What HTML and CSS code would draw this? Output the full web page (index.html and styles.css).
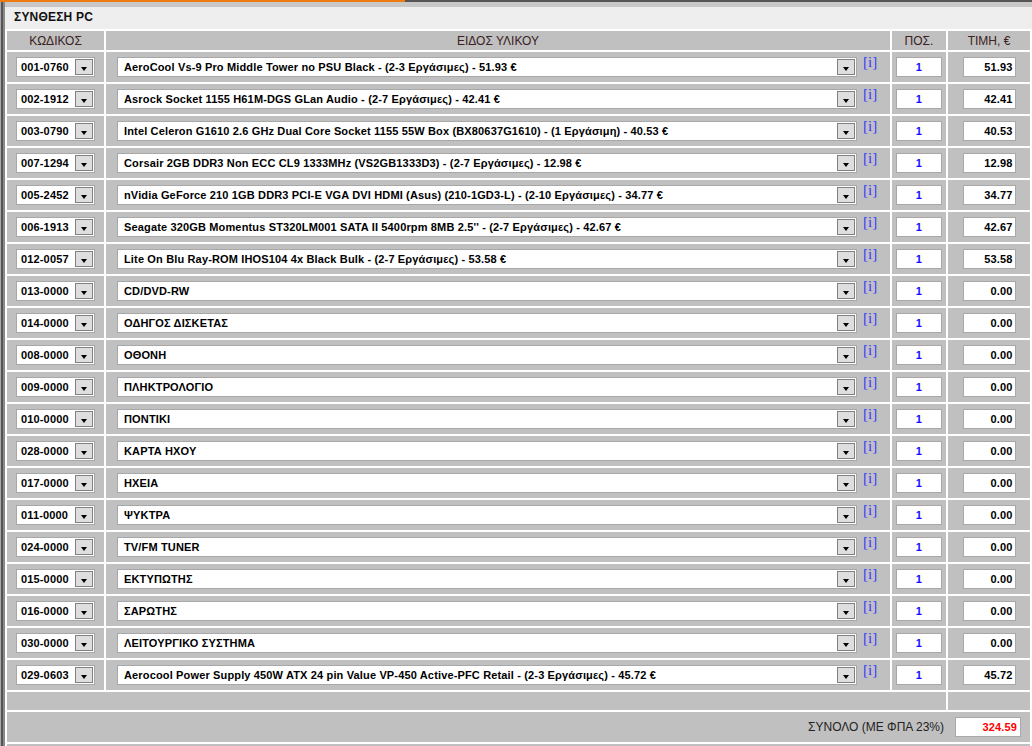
FILE: index.html
```html
<!DOCTYPE html>
<html lang="el">

<head>
    <meta charset="UTF-8">
    <title>Σύνθεση PC</title>
    <link rel="stylesheet" href="styles.css">
</head>

<body>
    <div class="topbar"><span class="accent"></span></div>
    <div class="panel">
        <div class="strip"></div>
        <div class="title">ΣΥΝΘΕΣΗ PC</div>

        <table class="builder">
            <colgroup>
                <col class="c-code">
                <col class="c-item">
                <col class="c-qty">
                <col class="c-price">
            </colgroup>
            <thead>
                <tr>
                    <th>ΚΩΔΙΚΟΣ</th>
                    <th>ΕΙΔΟΣ ΥΛΙΚΟΥ</th>
                    <th>ΠΟΣ.</th>
                    <th>ΤΙΜΗ, €</th>
                </tr>
            </thead>
            <tbody>
                <tr>
                    <td class="code"><div class="combo small"><span class="val">001-0760</span><span class="btn"></span></div></td>
                    <td class="item"><div class="combo wide"><span class="val">AeroCool Vs-9 Pro Middle Tower no PSU Black - (2-3 Εργάσιμες) - 51.93 €</span><span class="btn"></span></div><a class="info" href="#">[i]</a></td>
                    <td class="qty"><div class="box">1</div></td>
                    <td class="price"><div class="box">51.93</div></td>
                </tr>
                <tr>
                    <td class="code"><div class="combo small"><span class="val">002-1912</span><span class="btn"></span></div></td>
                    <td class="item"><div class="combo wide"><span class="val">Asrock Socket 1155 H61M-DGS GLan Audio - (2-7 Εργάσιμες) - 42.41 €</span><span class="btn"></span></div><a class="info" href="#">[i]</a></td>
                    <td class="qty"><div class="box">1</div></td>
                    <td class="price"><div class="box">42.41</div></td>
                </tr>
                <tr>
                    <td class="code"><div class="combo small"><span class="val">003-0790</span><span class="btn"></span></div></td>
                    <td class="item"><div class="combo wide"><span class="val">Intel Celeron G1610 2.6 GHz Dual Core Socket 1155 55W Box (BX80637G1610) - (1 Εργάσιμη) - 40.53 €</span><span class="btn"></span></div><a class="info" href="#">[i]</a></td>
                    <td class="qty"><div class="box">1</div></td>
                    <td class="price"><div class="box">40.53</div></td>
                </tr>
                <tr>
                    <td class="code"><div class="combo small"><span class="val">007-1294</span><span class="btn"></span></div></td>
                    <td class="item"><div class="combo wide"><span class="val">Corsair 2GB DDR3 Non ECC CL9 1333MHz (VS2GB1333D3) - (2-7 Εργάσιμες) - 12.98 €</span><span class="btn"></span></div><a class="info" href="#">[i]</a></td>
                    <td class="qty"><div class="box">1</div></td>
                    <td class="price"><div class="box">12.98</div></td>
                </tr>
                <tr>
                    <td class="code"><div class="combo small"><span class="val">005-2452</span><span class="btn"></span></div></td>
                    <td class="item"><div class="combo wide"><span class="val">nVidia GeForce 210 1GB DDR3 PCI-E VGA DVI HDMI (Asus) (210-1GD3-L) - (2-10 Εργάσιμες) - 34.77 €</span><span class="btn"></span></div><a class="info" href="#">[i]</a></td>
                    <td class="qty"><div class="box">1</div></td>
                    <td class="price"><div class="box">34.77</div></td>
                </tr>
                <tr>
                    <td class="code"><div class="combo small"><span class="val">006-1913</span><span class="btn"></span></div></td>
                    <td class="item"><div class="combo wide"><span class="val">Seagate 320GB Momentus ST320LM001 SATA II 5400rpm 8MB 2.5'' - (2-7 Εργάσιμες) - 42.67 €</span><span class="btn"></span></div><a class="info" href="#">[i]</a></td>
                    <td class="qty"><div class="box">1</div></td>
                    <td class="price"><div class="box">42.67</div></td>
                </tr>
                <tr>
                    <td class="code"><div class="combo small"><span class="val">012-0057</span><span class="btn"></span></div></td>
                    <td class="item"><div class="combo wide"><span class="val">Lite On Blu Ray-ROM IHOS104 4x Black Bulk - (2-7 Εργάσιμες) - 53.58 €</span><span class="btn"></span></div><a class="info" href="#">[i]</a></td>
                    <td class="qty"><div class="box">1</div></td>
                    <td class="price"><div class="box">53.58</div></td>
                </tr>
                <tr>
                    <td class="code"><div class="combo small"><span class="val">013-0000</span><span class="btn"></span></div></td>
                    <td class="item"><div class="combo wide"><span class="val">CD/DVD-RW</span><span class="btn"></span></div><a class="info" href="#">[i]</a></td>
                    <td class="qty"><div class="box">1</div></td>
                    <td class="price"><div class="box">0.00</div></td>
                </tr>
                <tr>
                    <td class="code"><div class="combo small"><span class="val">014-0000</span><span class="btn"></span></div></td>
                    <td class="item"><div class="combo wide"><span class="val">ΟΔΗΓΟΣ ΔΙΣΚΕΤΑΣ</span><span class="btn"></span></div><a class="info" href="#">[i]</a></td>
                    <td class="qty"><div class="box">1</div></td>
                    <td class="price"><div class="box">0.00</div></td>
                </tr>
                <tr>
                    <td class="code"><div class="combo small"><span class="val">008-0000</span><span class="btn"></span></div></td>
                    <td class="item"><div class="combo wide"><span class="val">ΟΘΟΝΗ</span><span class="btn"></span></div><a class="info" href="#">[i]</a></td>
                    <td class="qty"><div class="box">1</div></td>
                    <td class="price"><div class="box">0.00</div></td>
                </tr>
                <tr>
                    <td class="code"><div class="combo small"><span class="val">009-0000</span><span class="btn"></span></div></td>
                    <td class="item"><div class="combo wide"><span class="val">ΠΛΗΚΤΡΟΛΟΓΙΟ</span><span class="btn"></span></div><a class="info" href="#">[i]</a></td>
                    <td class="qty"><div class="box">1</div></td>
                    <td class="price"><div class="box">0.00</div></td>
                </tr>
                <tr>
                    <td class="code"><div class="combo small"><span class="val">010-0000</span><span class="btn"></span></div></td>
                    <td class="item"><div class="combo wide"><span class="val">ΠΟΝΤΙΚΙ</span><span class="btn"></span></div><a class="info" href="#">[i]</a></td>
                    <td class="qty"><div class="box">1</div></td>
                    <td class="price"><div class="box">0.00</div></td>
                </tr>
                <tr>
                    <td class="code"><div class="combo small"><span class="val">028-0000</span><span class="btn"></span></div></td>
                    <td class="item"><div class="combo wide"><span class="val">ΚΑΡΤΑ ΗΧΟΥ</span><span class="btn"></span></div><a class="info" href="#">[i]</a></td>
                    <td class="qty"><div class="box">1</div></td>
                    <td class="price"><div class="box">0.00</div></td>
                </tr>
                <tr>
                    <td class="code"><div class="combo small"><span class="val">017-0000</span><span class="btn"></span></div></td>
                    <td class="item"><div class="combo wide"><span class="val">ΗΧΕΙΑ</span><span class="btn"></span></div><a class="info" href="#">[i]</a></td>
                    <td class="qty"><div class="box">1</div></td>
                    <td class="price"><div class="box">0.00</div></td>
                </tr>
                <tr>
                    <td class="code"><div class="combo small"><span class="val">011-0000</span><span class="btn"></span></div></td>
                    <td class="item"><div class="combo wide"><span class="val">ΨΥΚΤΡΑ</span><span class="btn"></span></div><a class="info" href="#">[i]</a></td>
                    <td class="qty"><div class="box">1</div></td>
                    <td class="price"><div class="box">0.00</div></td>
                </tr>
                <tr>
                    <td class="code"><div class="combo small"><span class="val">024-0000</span><span class="btn"></span></div></td>
                    <td class="item"><div class="combo wide"><span class="val">TV/FM TUNER</span><span class="btn"></span></div><a class="info" href="#">[i]</a></td>
                    <td class="qty"><div class="box">1</div></td>
                    <td class="price"><div class="box">0.00</div></td>
                </tr>
                <tr>
                    <td class="code"><div class="combo small"><span class="val">015-0000</span><span class="btn"></span></div></td>
                    <td class="item"><div class="combo wide"><span class="val">ΕΚΤΥΠΩΤΗΣ</span><span class="btn"></span></div><a class="info" href="#">[i]</a></td>
                    <td class="qty"><div class="box">1</div></td>
                    <td class="price"><div class="box">0.00</div></td>
                </tr>
                <tr>
                    <td class="code"><div class="combo small"><span class="val">016-0000</span><span class="btn"></span></div></td>
                    <td class="item"><div class="combo wide"><span class="val">ΣΑΡΩΤΗΣ</span><span class="btn"></span></div><a class="info" href="#">[i]</a></td>
                    <td class="qty"><div class="box">1</div></td>
                    <td class="price"><div class="box">0.00</div></td>
                </tr>
                <tr>
                    <td class="code"><div class="combo small"><span class="val">030-0000</span><span class="btn"></span></div></td>
                    <td class="item"><div class="combo wide"><span class="val">ΛΕΙΤΟΥΡΓΙΚΟ ΣΥΣΤΗΜΑ</span><span class="btn"></span></div><a class="info" href="#">[i]</a></td>
                    <td class="qty"><div class="box">1</div></td>
                    <td class="price"><div class="box">0.00</div></td>
                </tr>
                <tr>
                    <td class="code"><div class="combo small"><span class="val">029-0603</span><span class="btn"></span></div></td>
                    <td class="item"><div class="combo wide"><span class="val">Aerocool Power Supply 450W ATX 24 pin Value VP-450 Active-PFC Retail - (2-3 Εργάσιμες) - 45.72 €</span><span class="btn"></span></div><a class="info" href="#">[i]</a></td>
                    <td class="qty"><div class="box">1</div></td>
                    <td class="price"><div class="box">45.72</div></td>
                </tr>
                <tr class="blank">
                    <td colspan="3"></td>
                    <td></td>
                </tr>
                <tr class="total">
                    <td colspan="4">
                        <div class="total-line">
                            <span>ΣΥΝΟΛΟ (ΜΕ ΦΠΑ 23%)</span>
                            <div class="box sum">324.59</div>
                        </div>
                    </td>
                </tr>
                <tr class="tail">
                    <td colspan="4"></td>
                </tr>
            </tbody>
        </table>
    </div>
</body>

</html>
```

FILE: styles.css
```css
body {
    margin: 0;
    background: #aaaaaa;
    font-family: "Liberation Sans", Arial, sans-serif;
    overflow: hidden;
}

.topbar {
    height: 2px;
    background: #555555;
}

.topbar .accent {
    display: block;
    width: 405px;
    height: 2px;
    background: #f07a12;
}

.panel {
    margin-left: 1px;
    border-left: 2px solid #555555;
    box-shadow: inset 2px 0 0 #8a8a8a;
    padding-left: 2px;
    background: #ffffff;
}

.strip {
    height: 5px;
    background: #c8c8c8;
}

.title {
    height: 21px;
    line-height: 21px;
    padding-left: 9px;
    padding-bottom: 1px;
    background: #eeeeee;
    font-size: 12px;
    font-weight: bold;
    letter-spacing: 0.2px;
    color: #111111;
}

.builder {
    width: 1027px;
    table-layout: fixed;
    border-spacing: 2px;
    background: #ffffff;
}

.c-code { width: 97px; }
.c-item { width: 784px; }
.c-qty { width: 54px; }
.c-price { width: 82px; }

.builder th,
.builder td {
    background: #c0c0c0;
    padding: 0;
}

.builder th {
    height: 19px;
    font-size: 12px;
    font-weight: normal;
    color: #3a2222;
    text-align: center;
}

.builder tbody td {
    height: 30px;
}

.builder td.code {
    padding-left: 9px;
}

.builder td.item {
    padding-left: 11px;
}

.builder td.item .combo,
.builder td.item .info {
    vertical-align: top;
}

.combo {
    display: inline-flex;
    box-sizing: border-box;
    height: 20px;
    border: 1px solid #a8a8a8;
    background: #ffffff;
    vertical-align: middle;
}

.combo.small { width: 79px; }
.combo.wide { width: 740px; }

.combo .val {
    flex: 1;
    padding-left: 4px;
    font-size: 11px;
    font-weight: bold;
    letter-spacing: 0.15px;
    line-height: 18px;
    color: #000000;
    white-space: nowrap;
    overflow: hidden;
}

.combo.wide .val {
    padding-left: 6px;
}

.combo .btn {
    position: relative;
    box-sizing: border-box;
    width: 18px;
    margin: 1px;
    border: 1px solid #7f7f7f;
    background: #dedede;
}

.combo .btn::after {
    content: "";
    position: absolute;
    left: 4.5px;
    top: 7px;
    border-left: 3.5px solid transparent;
    border-right: 3.5px solid transparent;
    border-top: 4px solid #000000;
}

.info {
    display: inline-block;
    margin-left: 6px;
    margin-top: -3px;
    font-family: "Liberation Serif", "Times New Roman", serif;
    font-size: 15px;
    line-height: 17px;
    color: #3a3aff;
    text-decoration: none;
}

.box {
    box-sizing: border-box;
    height: 20px;
    margin: 0 auto;
    border: 1px solid #a8a8a8;
    background: #ffffff;
    font-size: 11px;
    font-weight: bold;
    letter-spacing: 0.15px;
    line-height: 18px;
}

.qty .box {
    width: 46px;
    text-align: center;
    color: #1010ff;
}

.price .box {
    width: 53px;
    padding-right: 2px;
    text-align: right;
    color: #000000;
}

.builder tr.blank td {
    height: 18px;
}

.total-line {
    display: flex;
    justify-content: flex-end;
    align-items: center;
    gap: 11px;
    padding-right: 9px;
    font-size: 12px;
    color: #222222;
}

.box.sum {
    width: 66px;
    margin: 0;
    padding-right: 3px;
    text-align: right;
    color: #ff0000;
}

.builder tr.tail td {
    height: 10px;
}
```
